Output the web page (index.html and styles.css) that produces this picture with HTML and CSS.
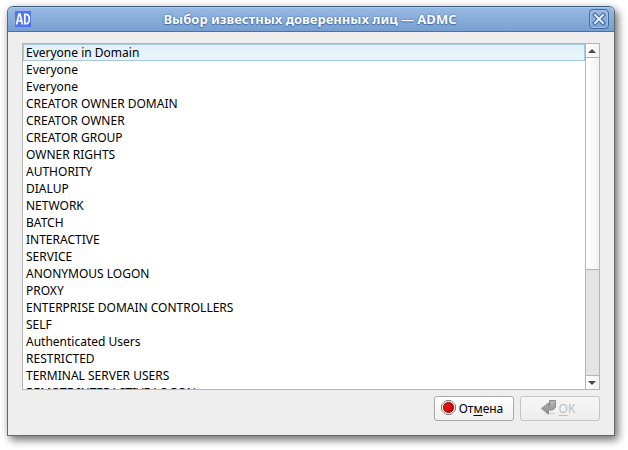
FILE: index.html
```
<!DOCTYPE html>
<html lang="ru">
<head>
    <meta charset="UTF-8">
    <meta name="viewport" content="width=device-width, initial-scale=1.0">
    <title>Выбор известных доверенных лиц — ADMC</title>
    <link rel="stylesheet" href="styles.css">
</head>
<body>
    <div class="dialog" role="dialog" aria-labelledby="title">
        <header class="titlebar">
            <svg class="app-icon" viewBox="0 0 16 16" aria-hidden="true">
                <rect width="16" height="16" fill="#4c74f4"/>
                <path d="M1.5 13.5L4 3h1l2.500 10.500M2.500 10h4" fill="none" stroke="#fff" stroke-width="1.700"/>
                <path d="M9.800 3.300v9.400h1.200c2.300 0 3.300-1.700 3.300-4.700s-1-4.700-3.300-4.700z" fill="none" stroke="#fff" stroke-width="1.700"/>
            </svg>
            <h1 class="title" id="title">Выбор известных доверенных лиц — ADMC</h1>
            <button type="button" class="close-btn" aria-label="Закрыть">
                <svg width="14" height="14" viewBox="0 0 14 14" aria-hidden="true">
                    <path d="M3 3l8 8M11 3l-8 8" stroke="#3c629b" stroke-width="4" stroke-linecap="square"/>
                    <path d="M3 3l8 8M11 3l-8 8" stroke="#e6eefa" stroke-width="2" stroke-linecap="square"/>
                </svg>
            </button>
        </header>

        <main class="content">
            <div class="list-box">
                <ul class="list" role="listbox" aria-labelledby="title" tabindex="0">
                    <li class="item current" role="option">Everyone in Domain</li>
                    <li class="item" role="option">Everyone</li>
                    <li class="item" role="option">Everyone</li>
                    <li class="item" role="option">CREATOR OWNER DOMAIN</li>
                    <li class="item" role="option">CREATOR OWNER</li>
                    <li class="item" role="option">CREATOR GROUP</li>
                    <li class="item" role="option">OWNER RIGHTS</li>
                    <li class="item" role="option">AUTHORITY</li>
                    <li class="item" role="option">DIALUP</li>
                    <li class="item" role="option">NETWORK</li>
                    <li class="item" role="option">BATCH</li>
                    <li class="item" role="option">INTERACTIVE</li>
                    <li class="item" role="option">SERVICE</li>
                    <li class="item" role="option">ANONYMOUS LOGON</li>
                    <li class="item" role="option">PROXY</li>
                    <li class="item" role="option">ENTERPRISE DOMAIN CONTROLLERS</li>
                    <li class="item" role="option">SELF</li>
                    <li class="item" role="option">Authenticated Users</li>
                    <li class="item" role="option">RESTRICTED</li>
                    <li class="item" role="option">TERMINAL SERVER USERS</li>
                    <li class="item" role="option">REMOTE INTERACTIVE LOGON</li>
                </ul>
                <div class="scrollbar">
                    <button type="button" class="scroll-btn scroll-up" aria-label="Вверх">
                        <svg width="8" height="4" viewBox="0 0 8 4" aria-hidden="true"><path d="M0 4l4-4 4 4z" fill="#4a4a4a"/></svg>
                    </button>
                    <div class="track">
                        <div class="thumb"></div>
                    </div>
                    <button type="button" class="scroll-btn scroll-down" aria-label="Вниз">
                        <svg width="8" height="4" viewBox="0 0 8 4" aria-hidden="true"><path d="M0 0l4 4 4-4z" fill="#4a4a4a"/></svg>
                    </button>
                </div>
            </div>

            <div class="buttons">
                <button type="button" class="btn">
                    <svg width="16" height="16" viewBox="0 0 16 16" aria-hidden="true">
                        <defs>
                            <radialGradient id="red" cx=".4" cy=".35" r=".7">
                                <stop offset="0" stop-color="#e81c1c"/>
                                <stop offset="1" stop-color="#c40000"/>
                            </radialGradient>
                        </defs>
                        <path d="M5 .5h5L14.500 5v5L10 14.500H5L.5 10V5z" fill="#e2e2de" stroke="#858585"/>
                        <circle cx="7.500" cy="7.500" r="5" fill="url(#red)" stroke="#b00000"/>
                    </svg>
                    <span>От<u>м</u>ена</span>
                </button>
                <button type="button" class="btn" disabled>
                    <svg width="16" height="16" viewBox="0 0 16 16" aria-hidden="true">
                        <defs>
                            <linearGradient id="grey" x1="0" y1="0" x2="0" y2="1">
                                <stop offset="0" stop-color="#b8b8b8"/>
                                <stop offset="1" stop-color="#8c8c8c"/>
                            </linearGradient>
                        </defs>
                        <ellipse cx="9" cy="13.500" rx="6" ry="1.500" fill="#dedede"/>
                        <path d="M8.500.5h6V6c0 2.500-2 4-4.500 4H7.500v4L.5 8.500 7.500 3v3h1z" fill="url(#grey)" stroke="#8c8c8c"/>
                    </svg>
                    <span><u>O</u>K</span>
                </button>
            </div>
        </main>
    </div>
</body>
</html>
```
FILE: styles.css
```
* {
    box-sizing: border-box;
}

body {
    margin: 0;
    height: 100vh;
    padding: 6px 13px 14px 7px;
    background: #fff;
    font-family: "Noto Sans", "Open Sans", sans-serif;
    font-size: 12px;
    color: #000;
}

.dialog {
    display: flex;
    flex-direction: column;
    height: 100%;
    border: 1px solid #686868;
    border-top-color: #3f6080;
    border-radius: 6px 6px 0 0;
    background: #eee;
    box-shadow: 3px 4px 8px rgba(0, 0, 0, 0.55), 0 0 8px rgba(0, 0, 0, 0.08);
}

.titlebar {
    display: flex;
    align-items: center;
    height: 25px;
    padding: 0 5px 0 7px;
    border-bottom: 1px solid #4a72a8;
    border-radius: 5px 5px 0 0;
    background: linear-gradient(#9bbae4, #779fd1);
    box-shadow: inset 0 1px #a9c6ea;
}

.app-icon {
    width: 16px;
    height: 16px;
}

.title {
    flex: 1;
    margin: 0;
    font-size: 13px;
    font-weight: bold;
    line-height: 24px;
    text-align: center;
    color: #fff;
    text-shadow: 0 0 2px #2f5a9c, 0 1px 1px #4c74ac;
}

.close-btn {
    display: flex;
    align-items: center;
    justify-content: center;
    width: 20px;
    height: 20px;
    padding: 0;
    border: 1px solid #44699f;
    border-radius: 4px;
    background: linear-gradient(#9bbae4, #7aa1d3);
    box-shadow: inset 0 0 0 1px #a3c0e6;
}

.content {
    display: flex;
    flex: 1;
    flex-direction: column;
    gap: 6px;
    min-height: 0;
    padding: 11px 14px 14px;
}

.list-box {
    display: flex;
    flex: 1;
    min-height: 0;
    border: 1px solid #b4b4b4;
    background: #fff;
}

.list {
    flex: 1;
    margin: 0;
    padding: 0;
    overflow: hidden;
    list-style: none;
    outline: none;
}

.item {
    height: 17px;
    padding: 0 3px;
    line-height: 17px;
    white-space: nowrap;
}

.current {
    padding: 0 2px;
    border: 1px solid #a9c8da;
    background: linear-gradient(#e3f0f8, #e8f5fc);
    line-height: 16px;
}

.scrollbar {
    display: flex;
    flex-direction: column;
    width: 14px;
    border-left: 1px solid #b4b4b4;
}

.scroll-btn {
    display: flex;
    align-items: center;
    justify-content: center;
    height: 14px;
    padding: 0 1px 0 0;
    border: 0;
    background: linear-gradient(to right, #fff, #f2f2f2);
}

.scroll-up {
    border-bottom: 1px solid #b4b4b4;
}

.scroll-down {
    border-top: 1px solid #b4b4b4;
}

.track {
    flex: 1;
    background: #e4e4e4;
}

.thumb {
    height: 67%;
    border-bottom: 1px solid #b4b4b4;
    background: linear-gradient(to right, #fff, #f2f2f2);
}

.buttons {
    display: flex;
    justify-content: flex-end;
    gap: 6px;
}

.btn {
    display: flex;
    align-items: center;
    justify-content: center;
    gap: 2px;
    width: 80px;
    height: 25px;
    padding: 0 4px 1px 0;
    border: 1px solid #a8a8a8;
    border-radius: 3px;
    background: linear-gradient(#fff, #f0f0f0);
    font-family: inherit;
    font-size: 12px;
    color: #000;
}

.btn:disabled {
    border-color: #c4c4c4;
    background: linear-gradient(#f6f6f6, #eee);
    color: #bebebe;
}

.btn u {
    text-underline-offset: 2px;
    text-decoration-skip-ink: none;
}
```
